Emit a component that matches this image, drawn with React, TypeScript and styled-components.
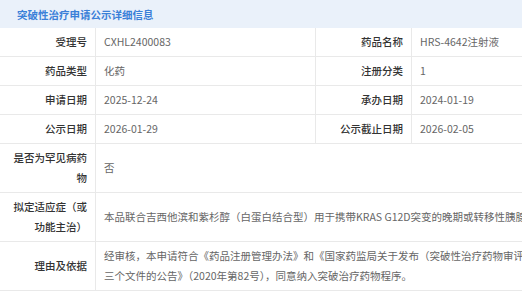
import React from "react";
import styled, { createGlobalStyle } from "styled-components";

const Global = createGlobalStyle`
  html, body { margin: 0; padding: 0; background: #fff; overflow: hidden; }
  body { font-family: "Noto Sans CJK SC", "Noto Sans", sans-serif; }
`;

const Panel = styled.div`
  width: 634px;
`;

const Header = styled.div`
  height: 28px;
  display: flex;
  align-items: center;
  padding-left: 17px;
  background: #eaf1fa;
  color: #3a80d8;
  font-size: 10.5px;
  font-weight: 600;
`;

const Table = styled.div`
  display: grid;
  grid-template-columns: 96px 220px 96px 222px;
  font-size: 10.5px;
  line-height: 20px;
`;

const Cell = styled.div<{ $span?: number; $nowrap?: boolean }>`
  padding: 4px 8px;
  border-bottom: 1px solid #e9e9e9;
  border-right: 1px solid #e9e9e9;
  display: flex;
  align-items: center;
  grid-column: span ${(p) => p.$span ?? 1};
  white-space: ${(p) => (p.$nowrap ? "nowrap" : "normal")};
`;

const Label = styled(Cell)`
  justify-content: flex-end;
  text-align: right;
  color: #333;
  font-weight: 500;
`;

const Value = styled(Cell)`
  color: #666;
`;

const Text = styled.span``;

export default function App() {
  return (
    <>
      <Global />
      <Panel>
        <Header>突破性治疗申请公示详细信息</Header>
        <Table>
          <Label>受理号</Label>
          <Value>CXHL2400083</Value>
          <Label>药品名称</Label>
          <Value>HRS-4642注射液</Value>

          <Label>药品类型</Label>
          <Value>化药</Value>
          <Label>注册分类</Label>
          <Value>1</Value>

          <Label>申请日期</Label>
          <Value>2025-12-24</Value>
          <Label>承办日期</Label>
          <Value>2024-01-19</Value>

          <Label>公示日期</Label>
          <Value>2026-01-29</Value>
          <Label>公示截止日期</Label>
          <Value>2026-02-05</Value>

          <Label>
            <Text>是否为罕见病药物</Text>
          </Label>
          <Value $span={3}>否</Value>

          <Label>
            <Text>拟定适应症（或功能主治）</Text>
          </Label>
          <Value $span={3} $nowrap>
            本品联合吉西他滨和紫杉醇（白蛋白结合型）用于携带KRAS G12D突变的晚期或转移性胰腺导管腺癌。
          </Value>

          <Label>理由及依据</Label>
          <Value $span={3}>
            <Text>
              经审核，本申请符合《药品注册管理办法》和《国家药监局关于发布（突破性治疗药物审评工作程序（试行））等
              <br />
              三个文件的公告》（2020年第82号），同意纳入突破治疗药物程序。
            </Text>
          </Value>
        </Table>
      </Panel>
    </>
  );
}
